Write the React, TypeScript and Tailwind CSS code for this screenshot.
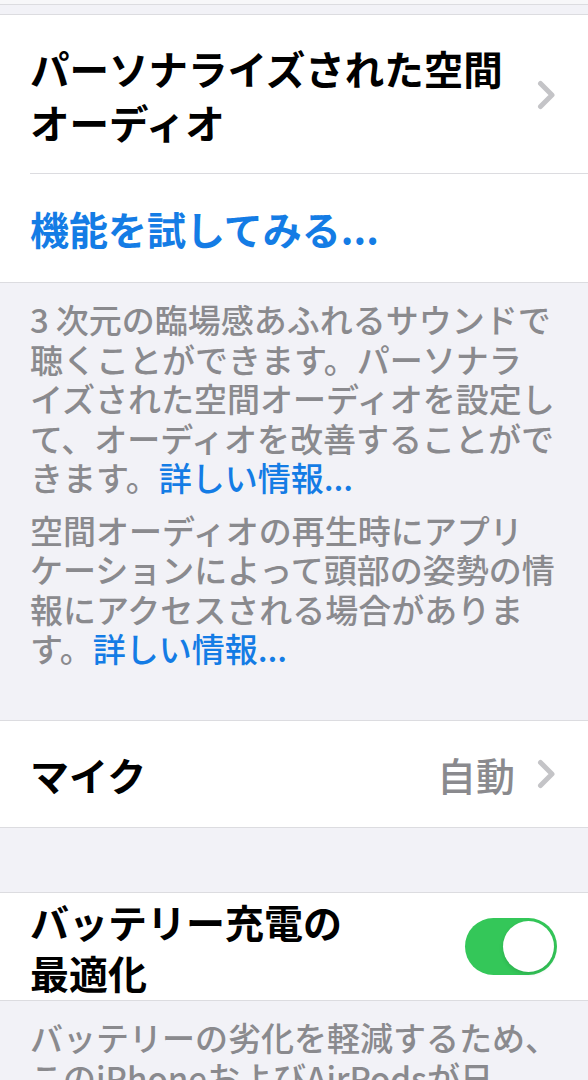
const Chevron = () => (
  <svg width="19" height="30" viewBox="0 0 19 30" className="shrink-0">
    <polyline
      points="3.5,3.5 15,15 3.5,26.5"
      fill="none"
      stroke="#c4c4c7"
      strokeWidth="5"
      strokeLinecap="round"
      strokeLinejoin="round"
    />
  </svg>
);

const Toggle = ({ on }: { on: boolean }) => (
  <div
    className={`w-[92px] h-[57px] rounded-full p-[3px] flex shrink-0 ${
      on ? "bg-[#34c759] justify-end" : "bg-[#e9e9ea] justify-start"
    }`}
  >
    <div className="w-[51px] h-[51px] rounded-full bg-white shadow-[0_2px_4px_rgba(0,0,0,0.12)]" />
  </div>
);

const Link = ({ children }: { children: React.ReactNode }) => (
  <span className="text-[#147ce5]">{children}</span>
);

export default function App() {
  return (
    <div
      className="w-[588px] h-[1080px] overflow-hidden bg-[#f2f2f7] text-black"
      style={{ fontFamily: '"Noto Sans CJK JP", "Noto Sans", sans-serif' }}
    >
      {/* top of previous group */}
      <div className="h-[5px] bg-[#f7f7f9] border-b border-[#dcdce0]" />
      <div className="h-[9px]" />

      {/* spatial audio group */}
      <section className="bg-white border-y border-[#dcdce0]">
        <div className="flex items-center pl-[30px] pr-[32px] pt-[26px] pb-[24px]">
          <div className="flex-1 text-[39.5px] leading-[54px] font-bold whitespace-nowrap">
            パーソナライズされた空間
            <br />
            オーディオ
          </div>
          <Chevron />
        </div>
        <div className="ml-[30px] h-px bg-[#dcdce0]" />
        <div className="h-[108px] flex items-center pl-[30px] text-[39px] font-bold text-[#147ce5]">
          機能を試してみる...
        </div>
      </section>

      <div className="px-[30px] pt-[17px] pb-[51.5px] text-[33px] leading-[39.5px] font-medium text-[#8a8a8e] whitespace-nowrap">
        <p>
          <span className="mr-[7px]">3</span>次元の臨場感あふれるサウンドで
          <br />
          聴くことができます。パーソナラ
          <br />
          イズされた空間オーディオを設定し
          <br />
          て、オーディオを改善することがで
          <br />
          きます。<Link>詳しい情報...</Link>
        </p>
        <p className="mt-[13px]">
          空間オーディオの再生時にアプリ
          <br />
          ケーションによって頭部の姿勢の情
          <br />
          報にアクセスされる場合がありま
          <br />
          す。<Link>詳しい情報...</Link>
        </p>
      </div>

      {/* microphone */}
      <section className="bg-white border-y border-[#dcdce0]">
        <div className="h-[106px] flex items-center pl-[30px] pr-[32px]">
          <span className="flex-1 text-[39px] font-bold">マイク</span>
          <span className="text-[39px] font-medium text-[#8a8a8e] mr-[22px]">自動</span>
          <Chevron />
        </div>
      </section>

      <div className="h-[64px]" />

      {/* battery */}
      <section className="bg-white border-y border-[#dcdce0]">
        <div className="h-[107px] flex items-center pl-[30px] pr-[31px]">
          <div className="flex-1 text-[39px] leading-[51px] font-bold whitespace-nowrap">
            バッテリー充電の
            <br />
            最適化
          </div>
          <Toggle on />
        </div>
      </section>

      <div className="px-[30px] pt-[17px] text-[33px] leading-[39.5px] font-medium text-[#8a8a8e] whitespace-nowrap">
        <p>
          バッテリーの劣化を軽減するため、
          <br />
          このiPhoneおよびAirPodsが日
          <br />
          常の充電パターンを学習し、
        </p>
      </div>
    </div>
  );
}
